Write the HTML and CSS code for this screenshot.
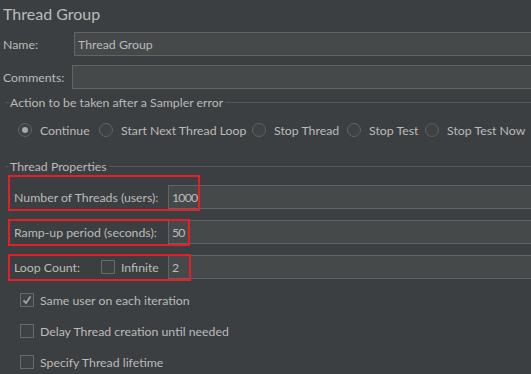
FILE: index.html
```html
<!DOCTYPE html>
<html lang="en">
<head>
    <meta charset="UTF-8">
    <meta name="viewport" content="width=device-width, initial-scale=1.0">
    <title>Thread Group</title>
    <link rel="stylesheet" href="styles.css">
</head>
<body>
    <div class="panel">
        <h1 class="title">Thread Group</h1>

        <div class="field name-field">
            <label for="name">Name:</label>
            <input type="text" id="name" class="text" value="Thread Group">
        </div>
        <div class="field comments-field">
            <label for="comments">Comments:</label>
            <input type="text" id="comments" class="text">
        </div>

        <div class="group sampler-group">
            <div class="group-title"><span>Action to be taken after a Sampler error</span></div>
            <div class="radios">
                <span class="radio-item continue"><span class="radio checked"></span>Continue</span>
                <span class="radio-item next-loop"><span class="radio"></span>Start Next Thread Loop</span>
                <span class="radio-item stop-thread"><span class="radio"></span>Stop Thread</span>
                <span class="radio-item stop-test"><span class="radio"></span>Stop Test</span>
                <span class="radio-item"><span class="radio"></span>Stop Test Now</span>
            </div>
        </div>

        <div class="group props-group">
            <div class="group-title"><span>Thread Properties</span></div>
            <div class="prop-rows">
                <div class="prop-row">
                    <span class="prop-label">Number of Threads (users):</span>
                    <input type="text" class="text" value="1000">
                    <span class="mark mark-threads"></span>
                </div>
                <div class="prop-row">
                    <span class="prop-label">Ramp-up period (seconds):</span>
                    <input type="text" class="text" value="50">
                    <span class="mark mark-rampup"></span>
                </div>
                <div class="prop-row">
                    <span class="prop-label loop-label">Loop Count:
                        <span class="check-item infinite"><span class="checkbox"></span>Infinite</span>
                    </span>
                    <input type="text" class="text" value="2">
                    <span class="mark mark-loop"></span>
                </div>
            </div>
        </div>

        <div class="checks">
            <div class="check-item">
                <span class="checkbox checked">
                    <svg width="12" height="12" viewBox="0 0 12 12"><polyline points="2.5,6.5 5,9 9.5,2.5" fill="none" stroke="#a0a0a0" stroke-width="1.8"/></svg>
                </span>Same user on each iteration
            </div>
            <div class="check-item"><span class="checkbox"></span>Delay Thread creation until needed</div>
            <div class="check-item"><span class="checkbox"></span>Specify Thread lifetime</div>
        </div>
    </div>
</body>
</html>
```

FILE: styles.css
```css
body {
    margin: 0;
    padding: 0;
    background-color: #3c3f41;
    color: #bbbbbb;
    font-family: Lato, "Liberation Sans", sans-serif;
    font-size: 12.3px;
    overflow: hidden;
}
.panel {
    width: 100%;
    height: 374px;
    overflow: hidden;
}
.title {
    margin: 0;
    height: 26px;
    padding-left: 3px;
    font-size: 16px;
    font-weight: normal;
    display: flex;
    align-items: center;
}
.field {
    display: flex;
    align-items: center;
    height: 24px;
}
.field label {
    padding-left: 3px;
    box-sizing: border-box;
}
.name-field {
    margin-top: 6px;
}
.name-field label {
    width: 74px;
}
.comments-field {
    margin-top: 9px;
}
.comments-field label {
    width: 72px;
}
.text {
    flex: 1;
    min-width: 0;
    box-sizing: border-box;
    height: 24px;
    margin: 0;
    padding: 0 3px;
    background-color: #45494a;
    border: 1px solid #646464;
    border-right-width: 0;
    color: #bbbbbb;
    font: inherit;
    outline: none;
}
.group-title {
    display: flex;
    align-items: center;
    height: 14px;
    padding-left: 5px;
}
.group-title::before {
    content: "";
    width: 4px;
    border-top: 1px solid #555555;
    margin-right: 1px;
}
.group-title::after {
    content: "";
    flex: 1;
    border-top: 1px solid #555555;
    margin-left: 2px;
}
.sampler-group {
    margin-top: 6px;
}
.radios {
    display: flex;
    align-items: center;
    height: 16px;
    margin-top: 13px;
    padding-left: 18px;
    white-space: nowrap;
}
.radio-item {
    display: flex;
    align-items: center;
    gap: 8px;
    flex: none;
}
.radio-item.continue {
    width: 81px;
}
.radio-item.next-loop {
    width: 153px;
}
.radio-item.stop-thread {
    width: 95px;
}
.radio-item.stop-test {
    width: 78px;
}
.radio {
    width: 14px;
    height: 14px;
    box-sizing: border-box;
    border: 1px solid #5f6161;
    border-radius: 50%;
    background-color: #3f4244;
    display: flex;
    align-items: center;
    justify-content: center;
}
.radio.checked::after {
    content: "";
    width: 6px;
    height: 6px;
    border-radius: 50%;
    background-color: #a8a8a8;
}
.props-group {
    margin-top: 21px;
}
.prop-rows {
    display: flex;
    flex-direction: column;
    gap: 11px;
    margin-top: 12px;
}
.prop-row {
    position: relative;
    display: flex;
    align-items: center;
    height: 24px;
}
.prop-label {
    width: 168px;
    flex-shrink: 0;
    box-sizing: border-box;
    padding-left: 14px;
    display: flex;
    align-items: center;
    white-space: nowrap;
}
.loop-label .infinite {
    margin-left: auto;
    width: 67px;
}
.prop-row .text {
    padding-left: 3px;
    letter-spacing: -0.8px;
}
.mark {
    position: absolute;
    left: 8px;
    box-sizing: border-box;
    border: 2px solid #e3202a;
}
.mark-threads {
    top: -10px;
    width: 192px;
    height: 36px;
}
.mark-rampup {
    top: -1px;
    width: 182px;
    height: 27px;
}
.mark-loop {
    top: -1px;
    width: 183px;
    height: 27px;
}
.checks {
    display: flex;
    flex-direction: column;
    gap: 15px;
    margin-top: 13px;
    padding-left: 20px;
}
.check-item {
    display: flex;
    align-items: center;
    gap: 6px;
    height: 16px;
}
.checkbox {
    width: 14px;
    height: 14px;
    box-sizing: border-box;
    border: 1px solid #6a6a6a;
    background-color: #3f4244;
    display: flex;
    align-items: center;
    justify-content: center;
}
```
